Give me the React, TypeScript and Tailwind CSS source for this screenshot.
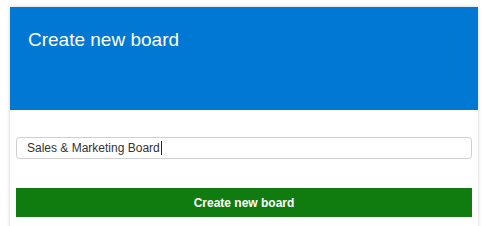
export default function App() {
  return (
    <div className="min-h-[226px] bg-white pt-[7px] font-['Liberation_Sans',Arial,sans-serif]">
      <div className="ml-[10px] w-[468px] bg-white pb-[12px] shadow-[0_0_4px_rgba(0,0,0,0.18)]">
        {/* Header */}
        <div className="h-[103px] bg-[#0078d4] px-[18px] pt-[21px]">
          <h1 className="text-[19px] leading-[23px] text-white">Create new board</h1>
        </div>

        {/* Body */}
        <div className="px-[6px] pt-[27px]">
          <div className="flex h-[22px] items-center rounded-[4px] border border-[#cfcfcf] bg-white pl-[10px]">
            <span className="text-[12px] text-[#333]">Sales &amp; Marketing Board</span>
            <span className="ml-[1px] h-[14px] w-px bg-[#222]" />
          </div>
          <button
            type="button"
            className="mt-[29px] flex h-[29px] w-full items-center justify-center bg-[#107c10] text-[12px] font-bold text-white"
          >
            Create new board
          </button>
        </div>
      </div>
    </div>
  );
}
